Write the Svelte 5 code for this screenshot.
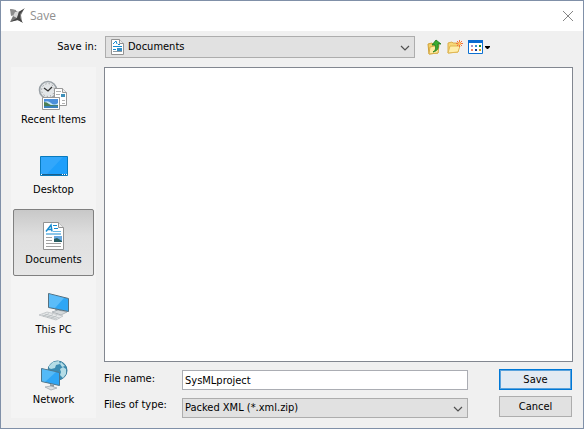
<script lang="ts">
	type Place = 'recent' | 'desktop' | 'documents' | 'pc' | 'network';

	const places: { id: Place; label: string }[] = [
		{ id: 'recent', label: 'Recent Items' },
		{ id: 'desktop', label: 'Desktop' },
		{ id: 'documents', label: 'Documents' },
		{ id: 'pc', label: 'This PC' },
		{ id: 'network', label: 'Network' }
	];

	let current = $state<Place>('documents');
	let folder = $state('Documents');
	let fileName = $state('SysMLproject');
	let fileType = $state('Packed XML (*.xml.zip)');
</script>

{#snippet chevron()}
	<svg class="chevron" width="10" height="6" viewBox="0 0 10 6" aria-hidden="true">
		<path d="M1 1l4 4 4-4" fill="none" stroke="#505050" stroke-width="1.2" />
	</svg>
{/snippet}

{#snippet placeIcon(id: Place)}
	<svg width="32" height="32" viewBox="0 0 32 32" aria-hidden="true">
		{#if id === 'recent'}
			<circle cx="10" cy="10" r="8.5" fill="#e3e6e8" stroke="#9aa1a6" stroke-width="1.6" />
			<circle cx="10" cy="10" r="6.4" fill="none" stroke="#888" stroke-dasharray="1 2.35" />
			<path d="M6 8l4 3 4-4" fill="none" stroke="#333" stroke-width="1.3" />
			<path d="M16.500 8.500h8l4 4v13h-12z" fill="#fff" stroke="#999" />
			<path d="M24.500 8.500v4h4" fill="#eee" stroke="#999" />
			<path d="M18 11.500h5M18 14.500h4M18 17.500h4M24 20.500h3M24 23.500h3" stroke="#b0b0b0" />
			<path d="M23 14h4v3h-4z" fill="#3d8fb9" />
			<path d="M4.500 17.500h17v12h-17z" fill="#fff" stroke="#999" />
			<path d="M6 19h14v9H6z" fill="#4b8fda" />
			<path d="M6 22q4-2 7 1t7 0v2H6z" fill="#c6e6f8" />
			<path d="M6 22q3 0 5 2t9 1v1H6z" fill="#4a7f56" />
			<path d="M6 26h14v2H6z" fill="#3a81bc" />
		{:else if id === 'desktop'}
			<path d="M2.500 6.500h27v19h-27z" fill="#1e9ffb" stroke="#087abd" />
			<path d="M3 7h22L9 24H3z" fill="#45b0fc" opacity=".5" />
			<path d="M3 24.500h26" stroke="#1a5f8c" />
			<path d="M3 24.500h1M24 24.500h1M26 24.500h1M28 24.500h1" stroke="#fff" />
		{:else if id === 'documents'}
			<path d="M5.500 2.500h15l5 5v22h-20z" fill="#fff" stroke="#929292" />
			<path d="M20.500 2.500v5h5" fill="#eee" stroke="#929292" />
			<path d="M8 11.500l5-6.500 1 6.500M10 9.500h4" fill="none" stroke="#168bd0" stroke-width="1.500" />
			<path d="M15 5.500h4M16 8.500h4M8 14h15" stroke="#168bd0" />
			<path d="M15 11.500h8" stroke="#6ab8e4" />
			<path d="M8 17.500h6M8 20.500h6M8 23.500h15M8 26.500h15" stroke="#a2a2a2" />
			<path d="M16 16h8v6h-8z" fill="#67a9e0" />
			<path d="M16 19l3-1 5 3v1h-8z" fill="#275d62" />
		{:else if id === 'pc'}
			<path d="M17 19l6 1 2 3-6 1z" fill="#8f989e" />
			<path d="M14 22l6-2 9 2-6 3z" fill="#d5d9db" stroke="#929a9f" stroke-width=".6" />
			<path d="M10.500 3.500l20 5v13l-20-4z" fill="#2fa6f5" stroke="#56707f" />
			<path d="M11 4l15 4-9 10-6-1z" fill="#7fcdfb" opacity=".55" />
			<path d="M1 25l8-3 16 4-7 4z" fill="#e8eaeb" stroke="#abb0b3" stroke-width=".6" />
			<path d="M4 25l15 4M6.500 24l15 4M5 26.500l6-3M9 27.500l6-3M13 28.500l6-3" stroke="#adb3b7" stroke-width=".6" />
		{:else}
			<circle cx="19.500" cy="10.500" r="9.500" fill="#3b8bb1" stroke="#3a7e9c" />
			<path d="M11 6l4-4 6-1 1 3-4 1-1 3-4 1-2-1zM22 9l3-2 3 2v5l-3 4-3-3 1-3zM23 2l4 4-3 1-2-3z" fill="#b5dde6" />
			<path d="M12 24l4 1v3h-4z" fill="#8c979d" />
			<path d="M7 27l6-1 6 2-6 2z" fill="#dce0e2" stroke="#9aa4a9" stroke-width=".7" />
			<path d="M3.500 8.500l18 4v13l-18-4z" fill="#2fa6f5" stroke="#4f7589" />
			<path d="M4 9l14 3L7 22l-3-1z" fill="#79cdf9" opacity=".5" />
		{/if}
	</svg>
{/snippet}

<div class="dialog" role="dialog" aria-labelledby="dialog-title">
	<header class="titlebar">
		<svg width="16" height="16" viewBox="0 0 16 16" aria-hidden="true">
			<path d="M1 1l5 1 3 2 6-3-3 6 1 7-5-2-7 2 3-6z" fill="#777" />
			<path d="M1 1l6 1-2 5-3 1z" fill="#8c8c8c" />
			<path d="M6 4l4-1-2 7-4-2z" fill="#d8d8d8" />
			<path d="M16 0l-5 6v4l3 5-5-3-8 2 7-4 2-6z" fill="#444" />
		</svg>
		<h1 id="dialog-title">Save</h1>
		<button class="close" type="button" aria-label="Close">
			<svg width="12" height="12" viewBox="0 0 12 12" aria-hidden="true">
				<path d="M1 1l10 10M11 1L1 11" stroke="#858585" />
			</svg>
		</button>
	</header>

	<form class="content" onsubmit={(event) => event.preventDefault()}>
		<div class="location">
			<label for="folder">Save in:</label>
			<div class="select folder">
				<svg class="folder-icon" width="13" height="16" viewBox="0 0 13 16" aria-hidden="true">
					<path d="M.5.5h8l4 4v11H.5z" fill="#fff" stroke="#929292" />
					<path d="M8.500.5v4h4" fill="#eee" stroke="#929292" />
					<path d="M2 5l3-3 1 3M2 7.500h9M7 5.500h2M2 10.500h3" fill="none" stroke="#168bd0" />
					<path d="M2 12.500h9" stroke="#8c9aa2" />
					<path d="M6 9h5v3H6z" fill="#3a91c7" />
				</svg>
				<select id="folder" bind:value={folder}>
					<option>Documents</option>
				</select>
				{@render chevron()}
			</div>
			<div class="tools">
				<button type="button" aria-label="Up one level">
					<svg width="15" height="16" viewBox="0 0 15 16" aria-hidden="true">
						<path d="M1 5l4-1 1 1h5v9l-9 1z" fill="#f3cf62" stroke="#cfa03a" />
						<path d="M3 8l9-2-1 8-9 1z" fill="#ffeba0" stroke="#d8ae48" />
						<path d="M6 13c3-2 3-4 2-7H5l4-5 5 4h-3c1 5-1 7-5 8z" fill="#3bac30" stroke="#19751a" stroke-width=".8" />
					</svg>
				</button>
				<button type="button" aria-label="Create new folder">
					<svg width="16" height="16" viewBox="0 0 16 16" aria-hidden="true">
						<path d="M1 4l4-1 1 1h5v9l-10 1z" fill="#f7d777" stroke="#dcae4c" />
						<path d="M3 7h10l-2 6-10 1z" fill="#ffeeaa" stroke="#e0b753" />
						<path d="M12.500 1v7M9 4.500h7M10 2l5 5M15 2l-5 5" stroke="#f4703c" />
						<circle cx="12.500" cy="4.500" r="1.500" fill="#ffca65" />
					</svg>
				</button>
				<button type="button" aria-label="View menu">
					<svg width="23" height="16" viewBox="0 0 23 16" aria-hidden="true">
						<path d="M.5 1.500h14v13H.5z" fill="#fff" stroke="#0d70d1" />
						<path d="M0 1h15v3H0z" fill="#086bd1" />
						<path d="M3 6h2v2H3z" fill="#a28fc5" />
						<path d="M7 6h2v2H7z" fill="#3194d2" />
						<path d="M11 6h2v2h-2z" fill="#228b22" />
						<path d="M3 10h2v2H3z" fill="#ef8062" />
						<path d="M7 10h2v2H7z" fill="#173b91" />
						<path d="M11 10h2v2h-2z" fill="#cfa010" />
						<path d="M17 7h5v1l-2 2h-1l-2-2z" fill="#000" />
					</svg>
				</button>
			</div>
		</div>

		<div class="body">
			<nav class="places" aria-label="Places">
				{#each places as place (place.id)}
					<button
						type="button"
						class:active={current === place.id}
						aria-pressed={current === place.id}
						onclick={() => (current = place.id)}
					>
						{@render placeIcon(place.id)}
						<span>{place.label}</span>
					</button>
				{/each}
			</nav>

			<div class="main">
				<div class="files" role="listbox" aria-label="Files" tabindex="0"></div>
				<div class="footer">
					<div class="labels">
						<label for="file-name">File name:</label>
						<label for="file-type">Files of type:</label>
					</div>
					<div class="fields">
						<input id="file-name" type="text" bind:value={fileName} />
						<div class="select">
							<select id="file-type" bind:value={fileType}>
								<option>Packed XML (*.xml.zip)</option>
							</select>
							{@render chevron()}
						</div>
					</div>
					<div class="actions">
						<button class="primary" type="submit">Save</button>
						<button type="button">Cancel</button>
					</div>
				</div>
			</div>
		</div>
	</form>
</div>

<style>
	:global(body) {
		background: #f0f0f0;
	}

	.dialog,
	.dialog * {
		box-sizing: border-box;
	}

	.dialog {
		border: 1px solid #8090a8;
		background: #f0f0f0;
		color: #000;
		font: 11px/14px 'DejaVu Sans Condensed', Tahoma, sans-serif;
	}

	button,
	input,
	select {
		margin: 0;
		padding: 0;
		border: 0;
		border-radius: 0;
		background: none;
		color: inherit;
		font: inherit;
	}

	svg {
		display: block;
	}

	.titlebar {
		display: flex;
		align-items: center;
		gap: 5px;
		height: 30px;
		padding: 0 8px;
		background: #fff;
	}

	h1 {
		flex: 1;
		margin: 0;
		color: #8f8f8f;
		font: 12px/16px 'Open Sans', 'Segoe UI', sans-serif;
	}

	.close {
		padding: 1px;
	}

	.content {
		display: flex;
		flex-direction: column;
		gap: 9px;
		padding: 5px 10px 10px;
	}

	.location {
		display: flex;
		align-items: center;
	}

	.location label {
		width: 86px;
		text-align: right;
	}

	.select {
		position: relative;
		height: 20px;
	}

	.select select {
		display: block;
		width: 100%;
		height: 100%;
		padding: 0 20px 0 2px;
		border: 1px solid #adadad;
		background: #e1e1e1;
		appearance: none;
	}

	.chevron {
		position: absolute;
		top: 50%;
		right: 5px;
		margin-top: -2px;
		pointer-events: none;
	}

	.select.folder {
		flex: 1;
		height: 22px;
		margin-left: 8px;
	}

	.folder select {
		padding-left: 22px;
	}

	.folder-icon {
		position: absolute;
		top: 3px;
		left: 6px;
	}

	.tools {
		display: flex;
		gap: 5px;
		width: 158px;
		padding-left: 12px;
	}

	.body {
		display: flex;
		gap: 8px;
	}

	.places {
		display: flex;
		flex-direction: column;
		gap: 3px;
		width: 85px;
		padding: 2px 2px 2px;
		background: #f4f4f4;
	}

	.places button {
		display: flex;
		flex-direction: column;
		align-items: center;
		gap: 1px;
		height: 67px;
		padding-top: 10px;
		border: 1px solid transparent;
		border-radius: 2px;
	}

	.places .active {
		border-color: #808080;
		background: linear-gradient(#c8c8c8, #dfdfdf 40%, #e6e6e6);
	}

	.main {
		display: flex;
		flex: 1;
		flex-direction: column;
		gap: 7px;
	}

	.files {
		flex: 1;
		border: 1px solid #828790;
		background: #fff;
	}

	.footer {
		display: flex;
		padding-right: 1px;
	}

	.labels {
		display: flex;
		flex-direction: column;
		gap: 12px;
		width: 78px;
		padding-top: 3px;
	}

	.fields {
		display: flex;
		flex: 1;
		flex-direction: column;
		gap: 8px;
		padding-top: 1px;
	}

	.fields input {
		width: 100%;
		height: 20px;
		padding: 0 2px;
		border: 1px solid #abadb3;
		background: #fff;
	}

	.actions {
		display: flex;
		flex-direction: column;
		gap: 6px;
		width: 73px;
		margin-left: 31px;
	}

	.actions button {
		height: 21px;
		border: 1px solid #adadad;
		background: #e1e1e1;
	}

	.actions .primary {
		border-color: #0078d7;
		background: #e3eaf2;
		box-shadow: inset 0 0 0 1px #5aa2dc;
	}
</style>
